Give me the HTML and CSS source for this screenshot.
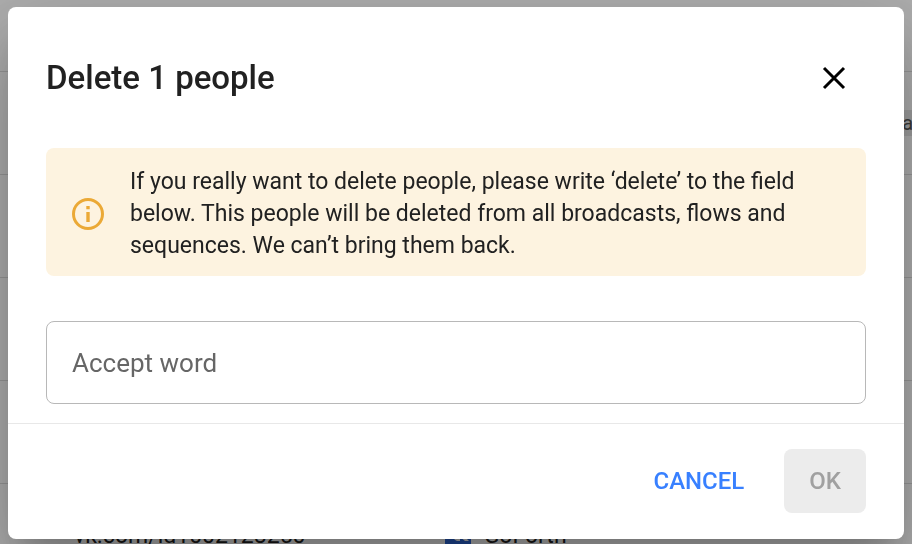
FILE: index.html
```html
<!DOCTYPE html>
<html lang="en">
<head>
    <meta charset="UTF-8">
    <meta name="viewport" content="width=device-width, initial-scale=1.0">
    <title>People</title>
    <link rel="stylesheet" href="styles.css">
</head>
<body>
    <main class="page">
        <table class="people">
            <tbody>
                <tr class="people-head"><td></td><td></td><td></td></tr>
                <tr><td></td><td></td><td><span class="tag">a</span></td></tr>
                <tr><td></td><td></td><td></td></tr>
                <tr><td></td><td></td><td></td></tr>
                <tr><td></td><td></td><td></td></tr>
                <tr>
                    <td>vk.com/id1002128250</td>
                    <td>
                        <div class="channel">
                            <svg class="channel-icon" viewBox="0 0 26 26" aria-hidden="true">
                                <rect width="26" height="26" fill="#2a66d9"/>
                                <path d="M5 8h3l4 6V8h3v5l4-5h4l-5 5 6 6h-4l-5-4v4h-3c-4-2-6-6-7-11z" fill="#fff"/>
                            </svg>
                            GoForth
                        </div>
                    </td>
                    <td></td>
                </tr>
            </tbody>
        </table>
    </main>

    <div class="overlay">
        <form class="dialog" role="dialog" aria-modal="true" aria-labelledby="dialog-title">
            <header class="dialog-header">
                <h2 id="dialog-title">Delete 1 people</h2>
                <button type="button" class="close-button" aria-label="Close">
                    <svg viewBox="0 0 24 24" aria-hidden="true">
                        <path d="M2 2l20 20M22 2L2 22" stroke="#000" stroke-width="3" fill="none"/>
                    </svg>
                </button>
            </header>

            <div class="dialog-content">
                <div class="notice">
                    <svg class="notice-icon" viewBox="0 0 32 32" aria-hidden="true">
                        <circle cx="16" cy="16" r="14.5" fill="none" stroke="#eba936" stroke-width="3"/>
                        <path d="M14.3 8h3.4v3.2h-3.4zM14.3 14h3.4v10h-3.4z" fill="#eba936"/>
                    </svg>
                    <p>If you really want to delete people, please write ‘delete’ to the field below. This people will be deleted from all broadcasts, flows and sequences. We can’t bring them back.</p>
                </div>
                <input type="text" class="text-field" placeholder="Accept word" aria-label="Accept word">
            </div>

            <footer class="dialog-actions">
                <button type="button" class="button button-text">Cancel</button>
                <button type="submit" class="button button-filled" disabled>OK</button>
            </footer>
        </form>
    </div>
</body>
</html>
```

FILE: styles.css
```css
* {
    box-sizing: border-box;
}

body {
    margin: 0;
    background-color: #fff;
    color: #212121;
    font-family: Roboto, sans-serif;
    font-size: 23px;
}

/* People list */
.page {
    height: 100vh;
    overflow: hidden;
}

.people {
    width: 100%;
    table-layout: fixed;
    border-collapse: separate;
    border-spacing: 0;
}

.people td {
    width: 47%;
    height: 103px;
    padding: 0 0 0 74px;
    border-bottom: 1px solid #ddd;
    white-space: nowrap;
}

.people td + td {
    padding-left: 16px;
}

.people td:last-child {
    width: 6%;
    padding-left: 40px;
}

.people .people-head td {
    height: 72px;
}

.channel {
    display: flex;
    align-items: center;
    gap: 13px;
}

.channel-icon {
    width: 26px;
    height: 26px;
}

.tag {
    display: block;
    padding-left: 5px;
    background-color: #e8e8e8;
    color: #555;
    font-size: 20px;
    line-height: 26px;
}

/* Dialog */
.overlay {
    position: fixed;
    inset: 0;
    padding: 7px 8px;
    background-color: rgba(0, 0, 0, 0.32);
}

.dialog {
    border-radius: 8px;
    background-color: #fff;
    box-shadow: 0 22px 30px -14px rgba(0, 0, 0, 0.2),
                0 48px 76px 6px rgba(0, 0, 0, 0.14),
                0 18px 92px 16px rgba(0, 0, 0, 0.12);
}

.dialog-header {
    display: flex;
    align-items: center;
    justify-content: space-between;
    padding: 47px 58px 0 38px;
}

.dialog-header h2 {
    margin: 0;
    font-size: 33px;
    font-weight: 500;
    line-height: 48px;
}

.close-button {
    display: flex;
    padding: 0;
    border: none;
    background: none;
    cursor: pointer;
}

.close-button svg {
    width: 24px;
    height: 24px;
}

.dialog-content {
    display: grid;
    gap: 45px;
    padding: 46px 38px 19px;
}

.notice {
    display: flex;
    align-items: center;
    gap: 26px;
    padding: 18px 26px 14px;
    border-radius: 8px;
    background-color: #fdf3e0;
}

.notice-icon {
    flex: none;
    width: 32px;
    height: 32px;
}

.notice p {
    margin: 0;
    line-height: 32px;
}

.text-field {
    width: 100%;
    height: 83px;
    padding: 0 25px;
    border: 1px solid #b8b8b8;
    border-radius: 8px;
    font-family: inherit;
    font-size: 26px;
}

.text-field::placeholder {
    color: #666;
}

.dialog-actions {
    display: flex;
    justify-content: flex-end;
    gap: 15px;
    padding: 25px 38px 26px;
    border-top: 1px solid #e8e8e8;
}

.button {
    height: 64px;
    padding: 0 25px;
    border: none;
    border-radius: 8px;
    font-family: inherit;
    font-size: 24px;
    font-weight: 500;
    text-transform: uppercase;
    cursor: pointer;
}

.button-text {
    background: none;
    color: #3880ff;
}

.button-filled {
    background-color: #ececec;
}

.button:disabled {
    color: #a0a0a0;
    cursor: default;
}
```
